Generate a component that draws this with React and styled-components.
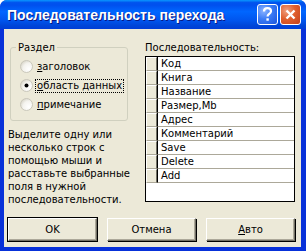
import React from "react";
import styled, { createGlobalStyle } from "styled-components";

const Global = createGlobalStyle`
  html, body { margin: 0; padding: 0; background: #ffffff; }
  body { font-family: "DejaVu Sans", Arial, sans-serif; }
`;

const UI_FONT = `"DejaVu Sans", "Liberation Sans", sans-serif`;

const Window = styled.div`
  width: 306px;
  height: 251px;
  box-sizing: border-box;
  display: flex;
  flex-direction: column;
  background: #0831d9;
  border-radius: 7px 7px 0 0;
  overflow: hidden;
  font-family: ${UI_FONT};
  font-size: 10px;
  color: #000;
`;

const TitleBar = styled.div`
  height: 29px;
  flex: none;
  display: flex;
  align-items: center;
  padding: 0 5px 0 7px;
  box-sizing: border-box;
  background: linear-gradient(
    to bottom,
    #0997ff 0%,
    #0053ee 9%,
    #0050ee 18%,
    #0066ff 40%,
    #0055ee 70%,
    #0046d8 88%,
    #003dd7 100%
  );
`;

const Title = styled.div`
  flex: 1;
  color: #fff;
  font-family: "Liberation Sans", Arial, sans-serif;
  font-weight: bold;
  font-size: 14px;
  text-shadow: 1px 1px 0 #0a1883;
  white-space: nowrap;
`;

const CaptionButton = styled.div`
  width: 21px;
  height: 21px;
  box-sizing: border-box;
  border: 1px solid #fff;
  border-radius: 3px;
  margin-left: 2px;
  display: flex;
  align-items: center;
  justify-content: center;
  background: ${(p) =>
    p.$close
      ? "radial-gradient(circle at 30% 30%, #f0a080 0%, #e0602e 45%, #c5401a 100%)"
      : "radial-gradient(circle at 30% 30%, #8cb4ff 0%, #3c7cf6 45%, #1a55dc 100%)"};
`;

const Client = styled.div`
  flex: 1;
  margin: 0 5px 4px 4px;
  background: #ece9d8;
  display: flex;
  flex-direction: column;
  padding: 13px 6px 0 6px;
  box-sizing: border-box;
`;

const Columns = styled.div`
  display: flex;
  gap: 17px;
`;

const LeftCol = styled.div`
  width: 118px;
  display: flex;
  flex-direction: column;
`;

const Group = styled.fieldset`
  margin: 0;
  padding: 4px 0 4px 0;
  border: 1px solid #d0d0bf;
  border-radius: 3px;
  height: 79px;
  box-sizing: border-box;
  display: flex;
  flex-direction: column;
`;

const Legend = styled.legend`
  margin-left: 5px;
  padding: 0 2px;
  line-height: 11px;
`;

const RadioRow = styled.div`
  height: 19px;
  display: flex;
  align-items: center;
  padding-left: 9px;
`;

const RadioLabel = styled.span`
  margin-left: 2px;
  padding: 0 1px;
  line-height: 12px;
  white-space: nowrap;
  border: 1px dotted ${(p) => (p.$focus ? "#000" : "transparent")};
`;

const Hint = styled.div`
  margin-top: 7px;
  margin-left: -2px;
  line-height: 13px;
  white-space: nowrap;
`;

const RightCol = styled.div`
  width: 150px;
  display: flex;
  flex-direction: column;
`;

const ListLabel = styled.div`
  line-height: 11px;
  height: 14px;
  white-space: nowrap;
`;

const ListBox = styled.div`
  height: 146px;
  box-sizing: border-box;
  border: 1px solid #000;
  background: #fff;
  display: flex;
  flex-direction: column;
`;

const Row = styled.div`
  height: 14px;
  display: flex;
  box-sizing: border-box;
`;

const Selector = styled.div`
  width: 11px;
  flex: none;
  box-sizing: border-box;
  background: #ece9d8;
  border-top: 1px solid #fff;
  border-left: 1px solid #fff;
  border-right: 1px solid #716f64;
  border-bottom: 1px solid #aca899;
`;

const Cell = styled.div`
  flex: 1;
  border-bottom: 1px solid #aca899;
  border-left: 1px solid #000;
  padding-left: 3px;
  line-height: 13px;
  white-space: nowrap;
`;

const ButtonBar = styled.div`
  margin-top: auto;
  margin-bottom: 6px;
  margin-left: -2px;
  display: flex;
  gap: 10px;
`;

const Button = styled.div`
  width: 90px;
  height: 23px;
  box-sizing: border-box;
  display: flex;
  align-items: center;
  justify-content: center;
  background: #ece9d8;
  border-top: 1px solid #fff;
  border-left: 1px solid #fff;
  border-right: 1px solid #716f64;
  border-bottom: 1px solid #716f64;
  box-shadow: ${(p) =>
    p.$default
      ? "0 0 0 1px #000, inset -1px -1px 0 #aca899"
      : "1px 1px 0 0 #000, inset -1px -1px 0 #aca899"};
`;

const Key = styled.span`
  text-decoration: underline;
`;

const Radio = ({ checked }) => (
  <svg width="13" height="13" viewBox="0 0 13 13">
    <defs>
      <radialGradient id="rg" cx="0.7" cy="0.7" r="0.8">
        <stop offset="0" stopColor="#ffffff" />
        <stop offset="0.6" stopColor="#f4f3ee" />
        <stop offset="1" stopColor="#d6d3c6" />
      </radialGradient>
    </defs>
    <circle cx="6.5" cy="6.5" r="6" fill="url(#rg)" stroke="#c9c7ba" strokeWidth="1" />
    {checked && <circle cx="6.5" cy="6.5" r="2" fill="#000" />}
  </svg>
);

const items = [
  "Код",
  "Книга",
  "Название",
  "Размер,Mb",
  "Адрес",
  "Комментарий",
  "Save",
  "Delete",
  "Add",
];

export default function App() {
  return (
    <>
      <Global />
      <Window>
        <TitleBar>
          <Title>Последовательность перехода</Title>
          <CaptionButton>
            <svg width="13" height="15" viewBox="0 0 13 15">
              <path
                d="M3 4.5 C3 2 4.5 1.2 6.5 1.2 C8.6 1.2 10 2.4 10 4.3 C10 6 8.7 6.7 7.6 7.4 C6.9 7.9 6.6 8.3 6.6 9.5"
                fill="none"
                stroke="#fff"
                strokeWidth="2.2"
              />
              <rect x="5.4" y="11.3" width="2.4" height="2.4" fill="#fff" />
            </svg>
          </CaptionButton>
          <CaptionButton $close>
            <svg width="13" height="13" viewBox="0 0 13 13">
              <path d="M2.5 2.5 L10.5 10.5 M10.5 2.5 L2.5 10.5" stroke="#fff" strokeWidth="2.4" />
            </svg>
          </CaptionButton>
        </TitleBar>
        <Client>
          <Columns>
            <LeftCol>
              <Group>
                <Legend>Раздел</Legend>
                <RadioRow>
                  <Radio />
                  <RadioLabel>
                    <Key>з</Key>аголовок
                  </RadioLabel>
                </RadioRow>
                <RadioRow>
                  <Radio checked />
                  <RadioLabel $focus>
                    <Key>о</Key>бласть данных
                  </RadioLabel>
                </RadioRow>
                <RadioRow>
                  <Radio />
                  <RadioLabel>
                    <Key>п</Key>римечание
                  </RadioLabel>
                </RadioRow>
              </Group>
              <Hint>
                Выделите одну или
                <br />
                несколько строк с
                <br />
                помощью мыши и
                <br />
                расставьте выбранные
                <br />
                поля в нужной
                <br />
                последовательности.
              </Hint>
            </LeftCol>
            <RightCol>
              <ListLabel>Последовательность:</ListLabel>
              <ListBox>
                {items.map((t) => (
                  <Row key={t}>
                    <Selector />
                    <Cell>{t}</Cell>
                  </Row>
                ))}
              </ListBox>
            </RightCol>
          </Columns>
          <ButtonBar>
            <Button $default>OK</Button>
            <Button>Отмена</Button>
            <Button>
              <span>
                <Key>А</Key>вто
              </span>
            </Button>
          </ButtonBar>
        </Client>
      </Window>
    </>
  );
}
